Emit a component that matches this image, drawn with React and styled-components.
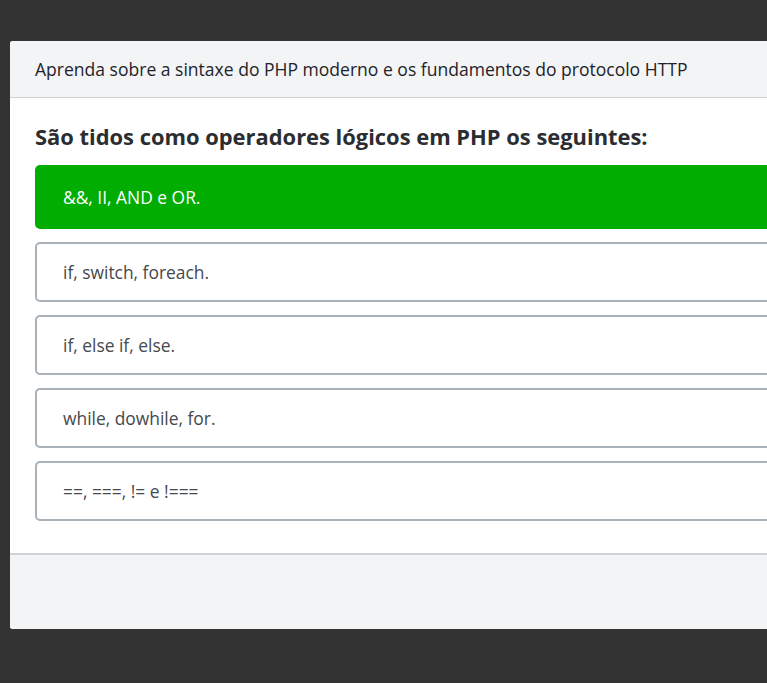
import styled, { createGlobalStyle } from "styled-components";

const GlobalStyle = createGlobalStyle`
  html, body {
    margin: 0;
    padding: 0;
    background: #333333;
    overflow: hidden;
  }
  body {
    font-family: "Open Sans", "Noto Sans", sans-serif;
  }
`;

const Page = styled.div`
  width: 767px;
  height: 683px;
  padding: 41px 0 0 10px;
  box-sizing: border-box;
  overflow: hidden;
`;

const Modal = styled.div`
  width: 900px;
  background: #ffffff;
  border-radius: 3px;
  overflow: hidden;
`;

const Header = styled.div`
  height: 56px;
  display: flex;
  align-items: center;
  padding: 0 25px;
  background: #f3f4f6;
  border-bottom: 1px solid #cfd3d8;
  font-size: 17.55px;
  color: #1f2329;
`;

const Body = styled.div`
  padding: 24px 0 32px 25px;
  display: flex;
  flex-direction: column;
  gap: 13px;
`;

const Question = styled.h2`
  margin: 0;
  font-size: 21.9px;
  line-height: 30px;
  font-weight: 700;
  color: #2b2d31;
`;

const Options = styled.div`
  display: flex;
  flex-direction: column;
  gap: 13px;
`;

const Option = styled.div`
  box-sizing: border-box;
  height: ${(p) => (p.$correct ? "64px" : "60px")};
  display: flex;
  align-items: center;
  padding: 0 26px;
  border-radius: 5px;
  border: 2px solid ${(p) => (p.$correct ? "#00ad00" : "#a9b1b9")};
  background: ${(p) => (p.$correct ? "#00ad00" : "#ffffff")};
  color: ${(p) => (p.$correct ? "#ffffff" : "#45484d")};
  font-size: 17.4px;
`;

const Footer = styled.div`
  height: 74px;
  background: #f3f4f6;
  border-top: 2px solid #cfd2d6;
`;

const options = [
  { text: "&&, II, AND e OR.", correct: true },
  { text: "if, switch, foreach." },
  { text: "if, else if, else." },
  { text: "while, dowhile, for." },
  { text: "==, ===, != e !===" },
];

export default function App() {
  return (
    <>
      <GlobalStyle />
      <Page>
        <Modal>
          <Header>
            Aprenda sobre a sintaxe do PHP moderno e os fundamentos do protocolo HTTP
          </Header>
          <Body>
            <Question>São tidos como operadores lógicos em PHP os seguintes:</Question>
            <Options>
              {options.map((o) => (
                <Option key={o.text} $correct={o.correct}>
                  {o.text}
                </Option>
              ))}
            </Options>
          </Body>
          <Footer />
        </Modal>
      </Page>
    </>
  );
}
